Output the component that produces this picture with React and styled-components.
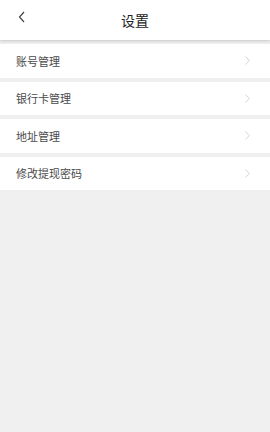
import React from "react";
import styled, { createGlobalStyle } from "styled-components";

const Global = createGlobalStyle`
  html, body { margin: 0; padding: 0; background: #f0f0f0; }
  body { font-family: "Noto Sans CJK SC", "Noto Sans", sans-serif; }
`;

const Page = styled.div`
  width: 270px;
  min-height: 432px;
  background: #f0f0f0;
  display: flex;
  flex-direction: column;
`;

const Header = styled.header`
  height: 40px;
  background: #fff;
  display: flex;
  align-items: center;
  justify-content: center;
  position: relative;
  box-shadow: 0 1px 3px rgba(0, 0, 0, 0.18);
  z-index: 1;
`;

const Back = styled.button`
  position: absolute;
  left: 14px;
  top: 9px;
  width: 16px;
  height: 16px;
  padding: 0;
  border: none;
  background: none;
  display: flex;
  align-items: center;
  justify-content: center;
`;

const Title = styled.h1`
  margin: 0;
  font-size: 14px;
  font-weight: 400;
  color: #222;
`;

const List = styled.div`
  display: flex;
  flex-direction: column;
  gap: 4px;
  padding-top: 4px;
`;

const Row = styled.div`
  height: 33.5px;
  background: #fff;
  display: flex;
  align-items: center;
  justify-content: space-between;
  padding: 0 20px 0 16px;
`;

const Label = styled.span`
  font-size: 11px;
  color: #4a4a4a;
`;

const items = ["账号管理", "银行卡管理", "地址管理", "修改提现密码"];

export default function App() {
  return (
    <Page>
      <Global />
      <Header>
        <Back aria-label="back">
          <svg width="8" height="12" viewBox="0 0 8 12">
            <path d="M6 1 L1.5 6 L6 11" fill="none" stroke="#444" strokeWidth="1.2" />
          </svg>
        </Back>
        <Title>设置</Title>
      </Header>
      <List>
        {items.map((t) => (
          <Row key={t}>
            <Label>{t}</Label>
            <svg width="5" height="9" viewBox="0 0 5 9">
              <path d="M0.5 0.5 L4.3 4.5 L0.5 8.5" fill="none" stroke="#d0d0d0" strokeWidth="0.9" />
            </svg>
          </Row>
        ))}
      </List>
    </Page>
  );
}
